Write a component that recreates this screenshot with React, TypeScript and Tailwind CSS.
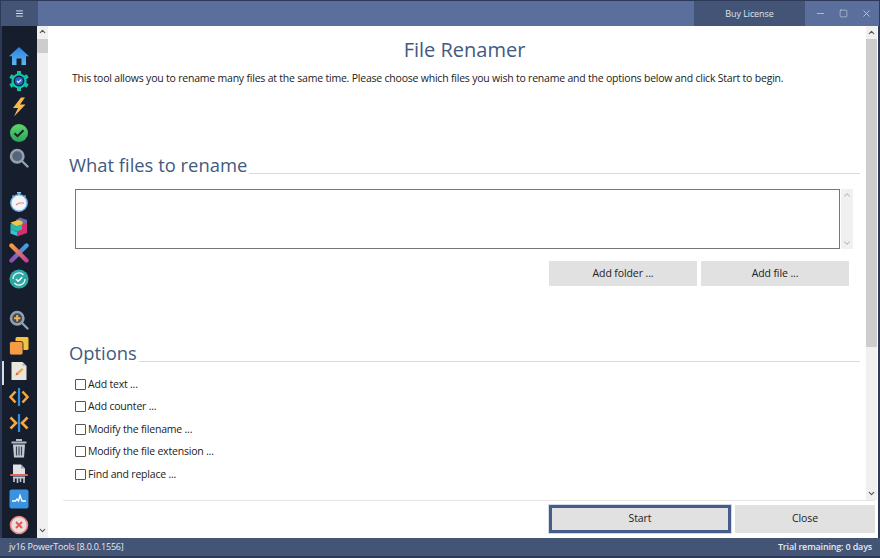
import React from 'react';
import { Menu, Minus, Square, X, ChevronUp, ChevronDown } from 'lucide-react';

const uiFont = "font-['Open_Sans',sans-serif]";

const Home = () => (
  <svg viewBox="0 0 20 20" className="w-5 h-5">
    <defs>
      <linearGradient id="hm" x1="0" y1="0" x2="0" y2="1">
        <stop offset="0" stopColor="#2d7fe0" />
        <stop offset="1" stopColor="#5cb6f0" />
      </linearGradient>
    </defs>
    <path d="M10 1 L20 10.3 L17 10.3 L17 19 L12.5 19 L12.5 12.5 L7.5 12.5 L7.5 19 L3 19 L3 10.3 L0 10.3 Z" fill="url(#hm)" />
  </svg>
);

const Gear = () => (
  <svg viewBox="0 0 20 20" className="w-5 h-5">
    <g stroke="#10c4a8" strokeWidth="4">
      <path d="M10 0V20M1.3 5L18.7 15M1.3 15L18.7 5" />
    </g>
    <circle cx="10" cy="10" r="7.6" fill="#10c4a8" />
    <circle cx="10" cy="10" r="5.4" fill="#16202f" />
    <circle cx="10" cy="10" r="4" fill="#2a62c9" />
    <path d="M8 10l1.5 1.5L12.3 8.7" fill="none" stroke="#e8f0ff" strokeWidth="1.2" />
  </svg>
);

const Bolt = () => (
  <svg viewBox="0 0 20 20" className="w-5 h-5">
    <path d="M12 0.5 L4 11 L9 11 L5 19.5 L16.5 7.5 L11 7.5 L16 0.5 Z" fill="#fbb848" />
  </svg>
);

const Check = () => (
  <svg viewBox="0 0 20 20" className="w-5 h-5">
    <defs>
      <linearGradient id="chk" x1="0" y1="0" x2="0" y2="1">
        <stop offset="0" stopColor="#5ed668" />
        <stop offset="1" stopColor="#27a65c" />
      </linearGradient>
    </defs>
    <circle cx="10" cy="10" r="9" fill="url(#chk)" />
    <path d="M5.5 10.2l3 3 6-6" fill="none" stroke="#16202f" strokeWidth="2" />
  </svg>
);

const Search = ({ plus }: { plus?: boolean }) => (
  <svg viewBox="0 0 20 20" className="w-5 h-5">
    <circle cx="8.2" cy="8.2" r="6.2" fill={plus ? '#3c4a5c' : '#55647a'} stroke="#93a0ad" strokeWidth="2.6" />
    <path d="M13 13l5.5 5.5" stroke="#93a0ad" strokeWidth="2.4" strokeLinecap="round" />
    {plus && <path d="M8.2 5v6.4M5 8.2h6.4" stroke="#f5b04a" strokeWidth="2" />}
  </svg>
);

const Timer = () => (
  <svg viewBox="0 0 20 20" className="w-5 h-5">
    <path d="M8 0.8h4M10 1v2.5M3.5 3.5l2 2M16.5 3.5l-2 2" stroke="#8fc4ee" strokeWidth="1.4" />
    <circle cx="10" cy="11" r="8.2" fill="#f2f4f6" stroke="#6fb3e8" strokeWidth="1.4" />
    <path d="M10 11h5M10 11l-3 2" stroke="#e4837b" strokeWidth="1.2" />
  </svg>
);

const Blocks = () => (
  <svg viewBox="0 0 20 20" className="w-5 h-5">
    <path d="M11 0.5l7 2.500v6l-7 2-4-2v-6z" fill="#6a6fa8" />
    <path d="M1.500 5.500l8-2.500 4 1.500v5l-5 2z" fill="#f3c63f" />
    <path d="M1.500 6.500l6.500 2.500v6l-6.500-2.500z" fill="#26b7b0" />
    <path d="M1.500 12.500l6.500 2.500v4l-6.500-2.500z" fill="#37c3d0" />
    <path d="M8 9l10-3v10l-10 3.500z" fill="#d42f72" />
    <path d="M8 9l5-1.500v5l-5 2z" fill="#2bbd9f" />
  </svg>
);

const Cross = () => (
  <svg viewBox="0 0 20 20" className="w-5 h-5">
    <defs>
      <linearGradient id="xa" gradientUnits="userSpaceOnUse" x1="2" y1="2" x2="18" y2="18">
        <stop offset="0" stopColor="#f7a13a" />
        <stop offset="1" stopColor="#c43f9b" />
      </linearGradient>
      <linearGradient id="xb" gradientUnits="userSpaceOnUse" x1="18" y1="2" x2="2" y2="18">
        <stop offset="0" stopColor="#3aa7e8" />
        <stop offset="1" stopColor="#9a4bb0" />
      </linearGradient>
    </defs>
    <path d="M17.5 2.5L2.5 17.5" stroke="url(#xb)" strokeWidth="4.4" strokeLinecap="round" />
    <path d="M2.5 2.5L17.5 17.5" stroke="url(#xa)" strokeWidth="4.4" strokeLinecap="round" />
  </svg>
);

const Sync = () => (
  <svg viewBox="0 0 20 20" className="w-5 h-5">
    <circle cx="10" cy="10" r="9.6" fill="#2fa8a4" />
    <path d="M4 10a6 6 0 0 1 10.5-4M16 10a6 6 0 0 1-10.5 4" fill="none" stroke="#e8f7f5" strokeWidth="1.3" />
    <path d="M7 10l2.2 2.2 4-4" fill="none" stroke="#fff" strokeWidth="1.5" />
  </svg>
);

const Copies = () => (
  <svg viewBox="0 0 20 20" className="w-5 h-5">
    <rect x="6.5" y="1" width="13" height="13" rx="1.5" fill="#f2c33c" />
    <rect x="0.5" y="5.5" width="13.5" height="13.5" rx="2" fill="#f59c45" stroke="#16202f" strokeWidth="0.8" />
  </svg>
);

const Note = () => (
  <svg viewBox="0 0 20 20" className="w-5 h-5">
    <path d="M2.5 1h11l4 4v14h-15z" fill="#e9e6df" />
    <path d="M13.5 1v4h4z" fill="#b8bcc3" />
    <path d="M7 14l1-2.500L13 7l1.500 1.500L10 13z" fill="#f3a541" />
    <path d="M6.500 14.500l1-3 2 2z" fill="#e5574e" />
  </svg>
);

const CodeSplit = () => (
  <svg viewBox="0 0 20 20" className="w-5 h-5">
    <path d="M6.500 4.500L1.500 10l5 5.500M13.500 4.500l5 5.500-5 5.500" fill="none" stroke="#f5a83d" strokeWidth="2.600" />
    <path d="M10 1v18" stroke="#2f8fdc" strokeWidth="2.200" />
  </svg>
);

const CodeJoin = () => (
  <svg viewBox="0 0 20 20" className="w-5 h-5">
    <path d="M1.500 4.500l5.500 5.500-5.500 5.500M18.500 4.500L13 10l5.500 5.500" fill="none" stroke="#f5a83d" strokeWidth="2.600" />
    <path d="M10 1v18" stroke="#2f8fdc" strokeWidth="2.200" />
  </svg>
);

const Trash = () => (
  <svg viewBox="0 0 20 20" className="w-5 h-5">
    <path d="M7 2h6M2.500 4.500h15" stroke="#b4bdc5" strokeWidth="1.800" />
    <path d="M4 6.500h12l-1 13H5z" fill="#c2cad1" />
    <path d="M7.500 8.500v9M10 8.500v9M12.500 8.500v9" stroke="#3a4656" strokeWidth="1.200" />
  </svg>
);

const Shredder = () => (
  <svg viewBox="0 0 20 20" className="w-5 h-5">
    <path d="M4 0.500h8l4 4V10H4z" fill="#dfe3e8" />
    <path d="M12 0.500v4h4z" fill="#9aa3ad" />
    <rect x="1" y="10" width="18" height="2" rx="1" fill="#e0655c" />
    <path d="M4 12.500h12v2H4z" fill="#c5cbd2" />
    <path d="M5 14v4M8.500 14v5M11.500 14v4M15 14v5" stroke="#c5cbd2" strokeWidth="1.600" />
  </svg>
);

const Pulse = () => (
  <svg viewBox="0 0 20 20" className="w-5 h-5">
    <rect x="0.500" y="0.500" width="19" height="19" rx="2" fill="#3b93e0" />
    <path d="M3 12h3.500l1.500-2 1.500 2 1.500-5.500 2 5.500H17" fill="none" stroke="#fff" strokeWidth="1.300" />
  </svg>
);

const Stop = () => (
  <svg viewBox="0 0 20 20" className="w-5 h-5">
    <circle cx="10" cy="10" r="8.500" fill="#eadfdf" stroke="#e8837e" strokeWidth="1.600" />
    <path d="M7 7l6 6M13 7l-6 6" stroke="#e5544e" strokeWidth="1.800" />
  </svg>
);

const SideItem = ({ children }: { children: React.ReactNode }) => (
  <div className="h-[25.6px] flex items-center justify-center">{children}</div>
);

const Section = ({ title }: { title: string }) => (
  <div className="flex items-end ml-[21px] mr-[6px]">
    <h2 className="text-[18.4px] leading-[24px] text-[#425a80] whitespace-nowrap">{title}</h2>
    <div className="flex-1 h-px bg-[#c4e0f5] mb-[3px] ml-[2px]" />
  </div>
);

const options = [
  'Add text ...',
  'Add counter ...',
  'Modify the filename ...',
  'Modify the file extension ...',
  'Find and replace ...',
];

const App: React.FC = () => {
  return (
    <div className={`w-[880px] h-[558px] flex flex-col bg-[#2d3a57] overflow-hidden pb-[2px] ${uiFont}`}>
      {/* title bar */}
      <div className="h-[26px] flex shrink-0 pt-px">
        <div className="w-[37px] ml-px bg-[#435476] flex items-center justify-center text-[#dfe5ee]">
          <Menu className="w-[9px] h-[9px]" strokeWidth={2.5} />
        </div>
        <div className="flex-1 bg-[#5a6f9c]" />
        <div className="w-[111px] bg-[#435476] flex items-center justify-center text-[9px] tracking-[-0.1px] text-[#dfe5ee]">
          Buy License
        </div>
        <div className="w-[74px] mr-px bg-[#5a6f9c] flex items-center justify-around pl-[4px] pr-[1px] text-[#d8deea]">
          <Minus className="w-[11px] h-[11px]" strokeWidth={1.5} />
          <Square className="w-[9px] h-[9px]" strokeWidth={1.5} />
          <X className="w-[11px] h-[11px]" strokeWidth={1.5} />
        </div>
      </div>

      <div className="flex-1 flex min-h-0 mr-[2px]">
        {/* sidebar */}
        <div className="relative w-[35px] ml-[2px] bg-[#161e2d] pt-[17px] pr-px shrink-0">
          <SideItem><Home /></SideItem>
          <SideItem><Gear /></SideItem>
          <SideItem><Bolt /></SideItem>
          <SideItem><Check /></SideItem>
          <SideItem><Search /></SideItem>
          <div className="h-[18px]" />
          <SideItem><Timer /></SideItem>
          <SideItem><Blocks /></SideItem>
          <SideItem><Cross /></SideItem>
          <SideItem><Sync /></SideItem>
          <div className="h-[16px]" />
          <SideItem><Search plus /></SideItem>
          <SideItem><Copies /></SideItem>
          <SideItem><Note /></SideItem>
          <SideItem><CodeSplit /></SideItem>
          <SideItem><CodeJoin /></SideItem>
          <SideItem><Trash /></SideItem>
          <SideItem><Shredder /></SideItem>
          <SideItem><Pulse /></SideItem>
          <SideItem><Stop /></SideItem>
          <div className="absolute left-0 top-[335px] w-[2px] h-[24px] bg-[#d8dde5]" />
        </div>

        {/* left scrollbar */}
        <div className="w-[11px] bg-[#f0f0f0] flex flex-col items-center shrink-0 text-[#555]">
          <ChevronUp className="w-[9px] h-[11px]" strokeWidth={3} />
          <div className="w-full h-[14px] bg-[#cdcdcd] mt-[2px]" />
          <div className="flex-1" />
          <ChevronDown className="w-[9px] h-[11px] mb-[2px]" strokeWidth={3} />
        </div>

        {/* content */}
        <div className="flex-1 min-w-0 bg-white flex flex-col text-[#222]">
          <div className="flex-1 flex min-h-0">
            <div className="flex-1 min-w-0 overflow-hidden">
              <h1 className="text-[20px] leading-[27px] text-[#425a80] text-center mt-[10px] ml-[15px]">File Renamer</h1>
              <p className="text-[10.5px] tracking-[-0.21px] leading-[14px] ml-[24px] mt-[8px] whitespace-nowrap">
                This tool allows you to rename many files at the same time. Please choose which files you wish to rename and the options below and click Start to begin.
              </p>
              <div className="h-[68px]" />
              <Section title="What files to rename" />
              <div className="flex ml-[27px] mt-[12px] mr-[13px]">
                <div className="flex-1 h-[60px] border border-[#767676]" />
                <div className="w-[12px] ml-px bg-[#f0f0f0] flex flex-col justify-between items-center text-[#b5b5b5] py-[1px]">
                  <ChevronUp className="w-[10px] h-[10px]" strokeWidth={2.5} />
                  <ChevronDown className="w-[10px] h-[10px]" strokeWidth={2.5} />
                </div>
              </div>
              <div className="flex justify-end gap-[4px] mt-[12px] mr-[17px] text-[10.5px] tracking-[-0.1px]">
                <div className="w-[148px] h-[25px] pt-px bg-[#e1e1e1] flex items-center justify-center">Add folder ...</div>
                <div className="w-[148px] h-[25px] pt-px bg-[#e1e1e1] flex items-center justify-center">Add file ...</div>
              </div>
              <div className="h-[55px]" />
              <Section title="Options" />
              <div className="ml-[27px] mt-[12px] flex flex-col gap-[8.5px] text-[10.5px] tracking-[-0.2px]">
                {options.map((o) => (
                  <div key={o} className="flex items-center h-[14px]">
                    <div className="w-[11px] h-[11px] border border-[#555] rounded-[1px] mr-[2px]" />
                    <span className="pt-px">{o}</span>
                  </div>
                ))}
              </div>
            </div>
            {/* right scrollbar */}
            <div className="w-[11px] mr-[1px] bg-[#f0f0f0] flex flex-col items-center shrink-0 text-[#555]">
              <ChevronUp className="w-[9px] h-[13px]" strokeWidth={3} />
              <div className="w-full h-[308px] bg-[#cdcdcd]" />
              <div className="flex-1" />
              <ChevronDown className="w-[9px] h-[13px]" strokeWidth={3} />
            </div>
          </div>
          {/* footer */}
          <div className="h-[38px] shrink-0 ml-[15px] mr-[3px] border-t border-[#e6e6e6] flex justify-end items-start pt-[4px] gap-[4px] text-[10.5px] tracking-[-0.1px]">
            <div className="w-[182px] h-[28px] bg-[#e1e1e1] border-[3px] border-[#465c8a] outline outline-1 outline-[#d4dbe6] flex items-center justify-center">Start</div>
            <div className="w-[140px] h-[28px] bg-[#e1e1e1] flex items-center justify-center">Close</div>
          </div>
        </div>
      </div>

      {/* status bar */}
      <div className="h-[18px] shrink-0 bg-[#445475] flex items-center justify-between pl-[9px] pr-[8px] text-[9px] tracking-[-0.18px] text-[#e5e9f0]">
        <span>jv16 PowerTools [8.0.0.1556]</span>
        <span className="font-semibold">Trial remaining: 0 days</span>
      </div>
    </div>
  );
};

export default App;
